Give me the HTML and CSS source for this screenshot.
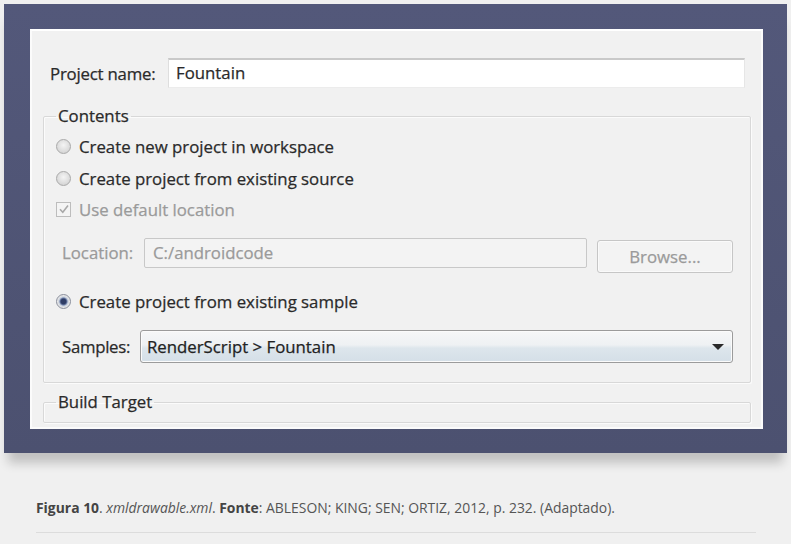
FILE: index.html
```html
<!DOCTYPE html>
<html lang="pt">
<head>
<meta charset="utf-8">
<title>Figura 10</title>
<link rel="stylesheet" href="styles.css">
</head>
<body>
<div class="page">
  <div class="frame">
    <div class="panel">
      <div class="project-row">
        <span class="lbl proj-lbl">Project name:</span>
        <div class="text-input">Fountain</div>
      </div>

      <fieldset class="group contents">
        <legend>Contents</legend>
        <div class="opt-row">
          <span class="radio"></span>
          <span class="opt-text">Create new project in workspace</span>
        </div>
        <div class="opt-row">
          <span class="radio"></span>
          <span class="opt-text">Create project from existing source</span>
        </div>
        <div class="opt-row check-row">
          <span class="checkbox">
            <svg viewBox="0 0 14 14" width="14" height="14"><path d="M3 7.2 L5.8 10.2 L11 3.6" fill="none" stroke="#a8a8a8" stroke-width="1.6"/></svg>
          </span>
          <span class="opt-text disabled">Use default location</span>
        </div>
        <div class="loc-row">
          <span class="lbl loc-lbl disabled">Location:</span>
          <div class="loc-input">C:/androidcode</div>
          <div class="browse">Browse...</div>
        </div>
        <div class="opt-row sample-opt">
          <span class="radio selected"></span>
          <span class="opt-text">Create project from existing sample</span>
        </div>
        <div class="samples-row">
          <span class="lbl samp-lbl">Samples:</span>
          <div class="select">
            <span>RenderScript &gt; Fountain</span>
            <span class="arrow"></span>
          </div>
        </div>
      </fieldset>

      <fieldset class="group build">
        <legend>Build Target</legend>
      </fieldset>
    </div>
  </div>

  <p class="caption"><b>Figura 10</b>. <i>xmldrawable.xml</i>. <b>Fonte</b>: ABLESON; KING; SEN; ORTIZ, 2012, p. 232. (Adaptado).</p>
  <div class="rule"></div>
</div>
</body>
</html>
```

FILE: styles.css
```css
* { box-sizing: border-box; }

html, body {
  margin: 0;
  padding: 0;
  background: #f0f0f0;
}

.page {
  padding: 4px 4px 0 4px;
  font-family: "Open Sans", "Noto Sans", sans-serif;
}

.frame {
  height: 449px;
  background: linear-gradient(#53587a, #4c5170);
  padding: 25px 24px 24px 26px;
  box-shadow: 0 14px 10px -4px rgba(0, 0, 0, 0.2);
}

.panel {
  height: 400px;
  background: #f1f1f1;
  border: 2px solid #fbfbfb;
  border-top-color: #ffffff;
  padding: 27px 10px 4px 11px;
  display: flex;
  flex-direction: column;
  overflow: hidden;
  color: #2a2a2a;
  font-size: 16.8px;
  -webkit-text-stroke: 0.25px;
}

.lbl { display: inline-block; white-space: nowrap; }

.project-row {
  display: flex;
  align-items: center;
  height: 30px;
  padding: 0 6px 0 7px;
}

.proj-lbl { width: 118px; letter-spacing: -0.2px; }

.text-input {
  flex: 1;
  height: 30px;
  background: #ffffff;
  border-top: 2px solid #c9c9c9;
  border-left: 1px solid #dedede;
  border-right: 1px solid #e6e6e6;
  border-bottom: 1px solid #ececec;
  padding: 0 7px;
  line-height: 26px;
}

.group {
  margin: 0;
  border: 1px solid #d8d8d8;
  box-shadow: inset 1px 1px 0 #fbfbfb, 1px 1px 0 #fbfbfb;
  border-radius: 2px;
  padding: 4px 17px 19px 12px;
  min-width: 0;
}

.group legend {
  padding: 0 2px;
  line-height: 20px;
  font-size: 16.8px;
  color: #2a2a2a;
}

.contents { margin-top: 18px; }

.build {
  margin-top: 9px;
  flex: 1;
  padding-bottom: 0;
}

.opt-row {
  display: flex;
  align-items: center;
  height: 32px;
}

.check-row { height: 30px; }

.sample-opt { margin-top: 12px; }

.opt-text { margin-left: 8px; white-space: nowrap; }

.disabled { color: #9a9a9a; }

.radio {
  width: 15px;
  height: 15px;
  border-radius: 50%;
  border: 1px solid #a9a9a9;
  background: radial-gradient(circle at 50% 40%, #f4f4f4 0%, #dcdcdc 60%, #c9c9c9 100%);
  flex: none;
}

.radio.selected {
  border-color: #8a8f9c;
  background: radial-gradient(circle, #2f3d66 0 2.5px, #6d7fa8 3.5px, #c7cfdd 4.5px, #e8e8e8 6px);
}

.checkbox {
  width: 15px;
  height: 15px;
  border: 1px solid #bdbdbd;
  background: #f4f4f4;
  flex: none;
  display: flex;
  align-items: center;
  justify-content: center;
}

.checkbox svg { display: block; margin: -1px; }

.loc-row {
  display: flex;
  align-items: flex-start;
  margin-top: 14px;
  padding-left: 6px;
}

.loc-lbl { width: 82px; line-height: 30px; }

.loc-input {
  flex: 1;
  height: 30px;
  border: 1px solid #c8c8c8;
  border-radius: 2px;
  background: #f3f3f3;
  color: #9a9a9a;
  padding: 0 8px;
  line-height: 27px;
}

.browse {
  width: 136px;
  height: 33px;
  margin: 2px 0 0 10px;
  border: 1px solid #c6c6c6;
  border-radius: 3px;
  background: #f3f3f3;
  box-shadow: inset 0 0 0 1px #fafafa;
  color: #9a9a9a;
  text-align: center;
  line-height: 31px;
}

.samples-row {
  display: flex;
  align-items: center;
  margin-top: 13px;
  padding-left: 6px;
}

.samp-lbl { width: 78px; letter-spacing: -0.3px; }

.select {
  flex: 1;
  height: 33px;
  border: 1px solid #9b9b9b;
  border-radius: 3px;
  background: linear-gradient(#f6f7f8 0%, #eef1f3 45%, #dde6ec 55%, #d4dfe7 100%);
  box-shadow: inset 0 0 0 1px #fbfbfb;
  display: flex;
  align-items: center;
  justify-content: space-between;
  padding: 0 8px 0 6px;
  color: #222222;
}

.arrow {
  width: 0;
  height: 0;
  border-left: 6px solid transparent;
  border-right: 6px solid transparent;
  border-top: 6px solid #2a2a2a;
}

.caption {
  margin: 45px 0 0 32px;
  font-size: 13.9px;
  line-height: 20px;
  color: #555555;
}

.caption b { font-weight: 700; color: #444; }

.rule {
  margin: 14px 31px 0 32px;
  border-top: 1px solid #dcdcdc;
}
```
